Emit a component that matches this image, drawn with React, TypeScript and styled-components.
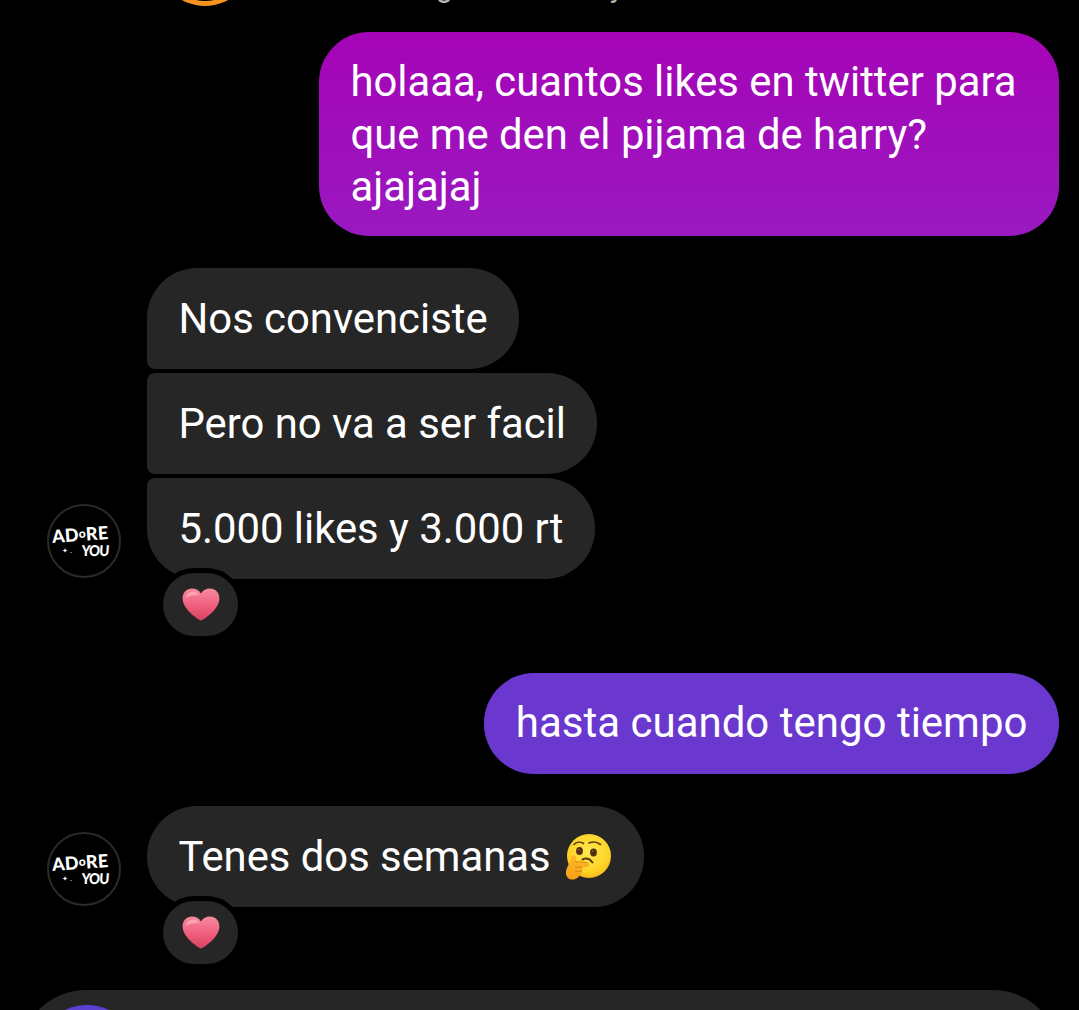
import React from "react";
import styled, { createGlobalStyle } from "styled-components";

const GlobalStyle = createGlobalStyle`
  html, body {
    margin: 0;
    background: #000;
    overflow: hidden;
  }
`;

const App = () => {
    return (
        <Page>
            <GlobalStyle />
            <TopPeek>
                <StoryRing />
                <PeekText>g</PeekText>
                <PeekTextEnd>y</PeekTextEnd>
            </TopPeek>

            <SentRow>
                <SentBubble $tall>holaaa, cuantos likes en twitter para que me den el pijama de harry? ajajajaj</SentBubble>
            </SentRow>

            <ReceivedRow>
                <AdoreAvatar />
                <BubbleStack>
                    <Bubble $position="first">Nos convenciste</Bubble>
                    <Bubble $position="middle">Pero no va a ser facil</Bubble>
                    <Bubble $position="last">
                        5.000 likes y 3.000 rt
                        <Reaction><Heart /></Reaction>
                    </Bubble>
                </BubbleStack>
            </ReceivedRow>

            <SentRow>
                <SentBubble>hasta cuando tengo tiempo</SentBubble>
            </SentRow>

            <ReceivedRow>
                <AdoreAvatar />
                <BubbleStack>
                    <Bubble $position="single">
                        Tenes dos semanas
                        <ThinkingFace />
                        <Reaction><Heart /></Reaction>
                    </Bubble>
                </BubbleStack>
            </ReceivedRow>

            <Composer>
                <CameraButton />
            </Composer>
        </Page>
    );
};

// logo of the account, hand-lettered look
const AdoreAvatar = () => (
    <Avatar>
        <LogoTop>AD<small>o</small>RE</LogoTop>
        <LogoBottom>
            <Sparkle>✦ .</Sparkle>
            <LogoYou>YOU</LogoYou>
        </LogoBottom>
    </Avatar>
);

const Heart = () => (
    <svg width="38" height="33" viewBox="0 0 38 33">
        <defs>
            <linearGradient id="heartFill" x1="0" y1="0" x2="0" y2="1">
                <stop offset="0" stopColor="#f8899f" />
                <stop offset="0.55" stopColor="#ef5f7e" />
                <stop offset="1" stopColor="#d9405f" />
            </linearGradient>
        </defs>
        <path
            d="M19 32.5C17.5 32.5 1 22 0.6 11C0.3 4.5 5 0.6 10 0.6C14 0.6 17 2.6 19 5.4C21 2.6 24 0.6 28 0.6C33 0.6 37.7 4.5 37.4 11C37 22 20.5 32.5 19 32.5Z"
            fill="url(#heartFill)"
        />
        <path
            d="M4 10C4.5 6 7.5 3.5 11 3.5C14 3.5 16 5 17.5 7.5C13 6.5 8 7.5 4 10Z"
            fill="#fbb3c1"
            opacity="0.7"
        />
    </svg>
);

const ThinkingFace = () => (
    <EmojiSlot>
        <svg width="46" height="46" viewBox="0 0 46 46">
            <defs>
                <radialGradient id="faceFill" cx="0.5" cy="0.4" r="0.65">
                    <stop offset="0" stopColor="#ffe850" />
                    <stop offset="0.7" stopColor="#fdd327" />
                    <stop offset="1" stopColor="#f5ae16" />
                </radialGradient>
                <linearGradient id="handFill" x1="0" y1="0" x2="0" y2="1">
                    <stop offset="0" stopColor="#fdb92a" />
                    <stop offset="1" stopColor="#f79f16" />
                </linearGradient>
            </defs>
            <circle cx="24" cy="22" r="22" fill="url(#faceFill)" />
            {/* brows */}
            <path d="M9 10.5C11.5 8 15.5 7.5 18.5 9.5" fill="none" stroke="#5c3a12" strokeWidth="1.6" strokeLinecap="round" />
            <path d="M24 9C27.5 7.5 32 7.8 35.5 10.5" fill="none" stroke="#5c3a12" strokeWidth="1.6" strokeLinecap="round" />
            {/* eyes */}
            <ellipse cx="14.5" cy="17" rx="3.4" ry="4.1" fill="#50300f" />
            <ellipse cx="28.5" cy="18.5" rx="3.4" ry="4.1" fill="#50300f" />
            <circle cx="13.6" cy="15.6" r="0.9" fill="#8a6a3a" />
            <circle cx="27.6" cy="17.1" r="0.9" fill="#8a6a3a" />
            {/* mouth */}
            <path d="M17.5 25.5C20.5 24 24.5 24.5 27.5 28.5" fill="none" stroke="#5c3a12" strokeWidth="2" strokeLinecap="round" />
            {/* hand under the chin */}
            <path
                d="M6.5 23C8 20.8 11 21.2 11 24L10.5 27.5L22 28.5C25 29 24.8 32.6 22 32.8L16.8 33.2C18.4 34.6 17.8 36.8 16.4 37.4C16.9 39 16 40.6 14.6 41C14 43.6 10.5 45.6 7.5 45.6C3 45.6 0.4 42 1 37.5C1.5 33.5 3.6 31.5 4.6 28.5Z"
                fill="url(#handFill)"
            />
            <path d="M10.5 27.5L22 28.5M16.8 33.2L10.5 33M16.4 37.4L10.5 37.2" fill="none" stroke="#dd8710" strokeWidth="1" strokeLinecap="round" />
        </svg>
    </EmojiSlot>
);

const Page = styled.div`
    width: 1079px;
    height: 1010px;
    overflow: hidden;
    background: #000;
    font-family: Roboto, "Liberation Sans", sans-serif;
    color: #fff;
`;

const TopPeek = styled.div`
    display: flex;
    align-items: flex-start;
    height: 6px;
    margin-bottom: 26px;
    overflow: hidden;
`;

const StoryRing = styled.div`
    flex: none;
    width: 96px;
    height: 96px;
    margin: -90px 0 0 157px;
    box-sizing: border-box;
    border-radius: 50%;
    border: 5px solid #f58a1f;
    border-bottom-color: #f7931e;
`;

const PeekText = styled.span`
    margin: -31px 0 0 183px;
    font-size: 30px;
    line-height: 36px;
    color: #b5b5b5;
`;

const PeekTextEnd = styled(PeekText)`
    margin-left: 157px;
`;

const SentRow = styled.div`
    display: flex;
    justify-content: flex-end;
    padding-right: 20px;
    margin-bottom: 32px;
`;

const SentBubble = styled.div<{ $tall?: boolean }>`
    box-sizing: border-box;
    max-width: 740px;
    min-height: 101px;
    padding: 24px 31.5px 22.5px;
    border-radius: 50px;
    font-size: ${(p) => (p.$tall ? "41.8px" : "42px")};
    line-height: 52.5px;
    background: ${(p) =>
        p.$tall ? "linear-gradient(180deg, #a504b6 0%, #9a19c0 100%)" : "#6a38cf"};
`;

const ReceivedRow = styled.div`
    display: flex;
    align-items: flex-end;
    gap: 26px;
    padding-left: 47px;
    margin-bottom: 94px;
`;

const Avatar = styled.div`
    flex: none;
    display: flex;
    flex-direction: column;
    align-items: center;
    justify-content: center;
    box-sizing: border-box;
    width: 74px;
    height: 74px;
    margin-bottom: 1px;
    border: 2px solid #2a2a2a;
    border-radius: 50%;
    background: #000;
    font-family: Lato, "Liberation Sans", sans-serif;
    font-weight: 900;
`;

const LogoTop = styled.div`
    margin-right: 7px;
    font-size: 18px;
    line-height: 18px;
    letter-spacing: 0.2px;
    transform: rotate(-4deg);

    small {
        font-size: 12px;
        vertical-align: 3px;
    }
`;

const LogoBottom = styled.div`
    display: flex;
    align-items: center;
    align-self: flex-end;
    gap: 8px;
    margin-right: 9px;
    line-height: 15px;
`;

const LogoYou = styled.span`
    font-size: 15px;
    letter-spacing: -0.8px;
    transform: scaleX(0.9) skewX(-4deg);
`;

const Sparkle = styled.span`
    font-size: 7px;
    font-weight: 400;
`;

const BubbleStack = styled.div`
    display: flex;
    flex-direction: column;
    align-items: flex-start;
    gap: 4px;
`;

const bubbleCorners = {
    first: "50px 50px 50px 8px",
    middle: "8px 50px 50px 8px",
    last: "8px 50px 50px 50px",
    single: "50px",
};

const Bubble = styled.div<{ $position: keyof typeof bubbleCorners }>`
    position: relative;
    display: flex;
    align-items: center;
    box-sizing: border-box;
    height: 101px;
    padding: 0 31.5px;
    border-radius: ${(p) => bubbleCorners[p.$position]};
    background: #262626;
    font-size: 41.8px;
    line-height: 52px;
`;

const EmojiSlot = styled.span`
    display: flex;
    margin-left: 14px;
    margin-right: 2px;
`;

const Reaction = styled.div`
    position: absolute;
    left: 11px;
    top: 90px;
    display: flex;
    align-items: center;
    justify-content: center;
    width: 85px;
    height: 73px;
    box-sizing: border-box;
    border: 5px solid #000;
    border-radius: 37px;
    background: #262626;
`;

const Composer = styled.div`
    box-sizing: border-box;
    display: flex;
    width: 1039px;
    height: 132px;
    margin: -11px 0 0 20px;
    padding: 15px;
    border-radius: 66px;
    background: #262626;
`;

const CameraButton = styled.div`
    width: 104px;
    height: 104px;
    border-radius: 50%;
    background: #5b3fd0;
`;

export default App;
